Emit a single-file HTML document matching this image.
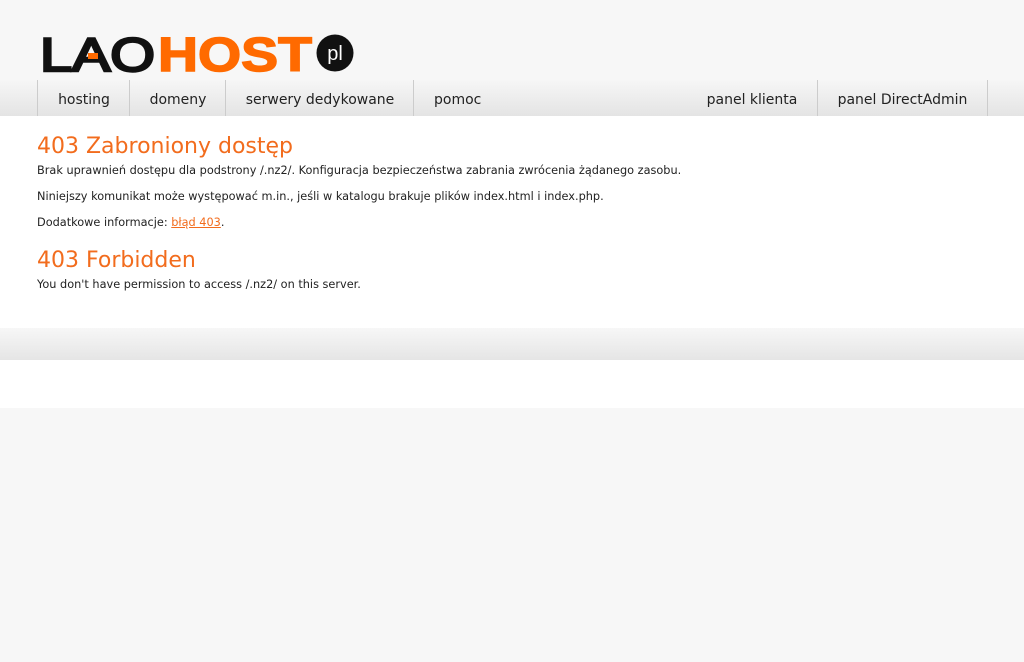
<!DOCTYPE html>
<html><head><meta charset="utf-8"><style>
body{margin:0;background:#f7f7f7;font-family:"DejaVu Sans","Liberation Sans",sans-serif;width:1024px;height:662px;overflow:hidden}
.top{height:80px;position:relative}
.nav{height:36px;background:linear-gradient(#f6f6f6,#e4e4e4);position:relative}
.nav a{position:absolute;top:0;height:36px;line-height:40px;font-size:14px;color:#222;text-decoration:none;text-align:center;border-left:1px solid #ccc}
.main{background:#fff;height:212px;padding:0 37px;box-sizing:border-box;color:#222}
h1{margin:0;font-weight:normal;color:#f26c1d;font-size:22px;padding-top:18px;line-height:26px}
h2{margin:0;font-weight:normal;color:#f26c1d;font-size:22px;line-height:26px;padding-top:18px}
p{margin:0;font-size:11.3px;line-height:14px}
.band{height:32px;background:linear-gradient(#f7f7f7,#e5e5e5)}
.w{height:48px;background:#fff}
</style></head><body>
<div class="top">
<svg width="380" height="80" style="position:absolute;left:0;top:0">
<text x="40" y="71" font-family="Liberation Sans" font-size="47" textLength="115" lengthAdjust="spacingAndGlyphs" fill="#111" stroke="#111" stroke-width="2.5">LAO</text>
<rect x="88" y="53" width="10" height="6" fill="#ff6a00"/>
<text x="158" y="71" font-family="Liberation Sans" font-weight="bold" font-size="48" textLength="154" lengthAdjust="spacingAndGlyphs" fill="#ff6a00" stroke="#ff6a00" stroke-width="1.5">HOST</text>
<circle cx="335" cy="53" r="18.5" fill="#111"/>
<text x="335" y="60" text-anchor="middle" font-family="Liberation Sans" font-size="20" fill="#fff">pl</text>
</svg>
</div>
<div class="nav">
<a style="left:37px;width:92px">hosting</a>
<a style="left:129px;width:96px">domeny</a>
<a style="left:225px;width:188px">serwery dedykowane</a>
<a style="left:413px;width:135px;text-align:left;padding-left:20px;box-sizing:border-box">pomoc</a>
<a style="left:687px;width:130px;border-left:none">panel klienta</a>
<a style="left:817px;width:169px;border-right:1px solid #ccc">panel DirectAdmin</a>
</div>
<div class="main">
<h1>403 Zabroniony dostęp</h1>
<p style="margin-top:4px">Brak uprawnień dostępu dla podstrony /.nz2/. Konfiguracja bezpieczeństwa zabrania zwrócenia żądanego zasobu.</p>
<p style="margin-top:12px">Niniejszy komunikat może występować m.in., jeśli w katalogu brakuje plików index.html i index.php.</p>
<p style="margin-top:12px">Dodatkowe informacje: <a style="color:#f26c1d;text-decoration:underline">błąd 403</a>.</p>
<h2>403 Forbidden</h2>
<p style="margin-top:4px">You don't have permission to access /.nz2/ on this server.</p>
</div>
<div class="band"></div>
<div class="w"></div>
</body></html>
